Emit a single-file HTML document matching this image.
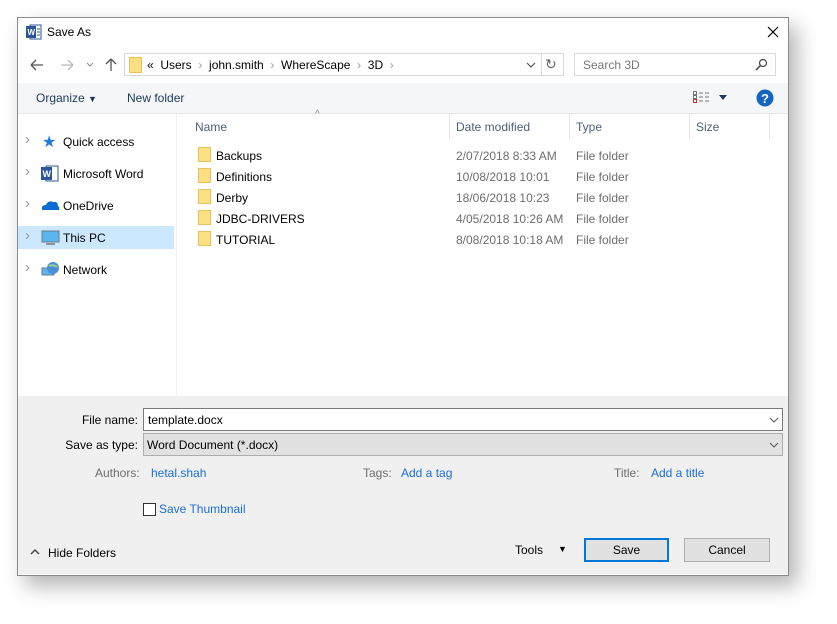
<!DOCTYPE html>
<html><head><style>
body{margin:0;width:837px;height:624px;background:#fff;font-family:"Liberation Sans",sans-serif;font-size:12px;color:#000;position:relative;overflow:hidden}
.a{position:absolute;white-space:nowrap}
.dlg{position:absolute;left:17px;top:17px;width:770px;height:557px;border:1px solid #8a8a8a;background:#fff;box-shadow:8px 10px 20px rgba(0,0,0,.3)}
.fold{position:absolute;width:13px;height:15px;background:#fcdf82;border:1px solid #e6c35c;box-sizing:border-box}
.blue{color:#1a6fd6}
.gray{color:#6d6d6d}
.chev{color:#999;font-size:12px}
.lbl{position:absolute;right:699px;white-space:nowrap}
</style></head><body>
<div class="dlg"></div>
<svg class="a" style="left:26px;top:24px" width="16" height="16"><rect x="4" y="1" width="11" height="14" fill="#fff" stroke="#2b579a"/><rect x="0" y="2" width="10" height="12" fill="#2b579a"/><text x="1.5" y="11" font-size="8" fill="#fff" font-family="Liberation Sans" font-weight="bold">W</text><line x1="11" y1="5" x2="14" y2="5" stroke="#2b579a"/><line x1="11" y1="8" x2="14" y2="8" stroke="#2b579a"/><line x1="11" y1="11" x2="14" y2="11" stroke="#2b579a"/></svg>
<div class="a" style="left:47px;top:25px">Save As</div>
<svg class="a" style="left:767px;top:26px" width="12" height="12"><path d="M1 1L11 11M11 1L1 11" stroke="#000" stroke-width="1.2"/></svg>
<svg class="a" style="left:29px;top:58px" width="90" height="14"><path d="M2 7H14M2 7L7 2M2 7L7 12" stroke="#555" stroke-width="1.3" fill="none"/><path d="M44 7H32M44 7L39 2M44 7L39 12" stroke="#bbb" stroke-width="1.3" fill="none"/><path d="M58 5L61 8L64 5" stroke="#888" fill="none"/><path d="M82 13V1M82 1L77 6M82 1L87 6" stroke="#555" stroke-width="1.3" fill="none"/></svg>
<div class="a" style="left:124px;top:53px;width:440px;height:23px;border:1px solid #d9d9d9;box-sizing:border-box"></div>
<div class="a" style="left:541px;top:53px;width:1px;height:23px;background:#d9d9d9"></div>
<div class="fold" style="left:129px;top:57px;height:16px"></div>
<div class="a" style="left:147px;top:58px;color:#000">« &nbsp;Users &nbsp;<span class="chev">›</span>&nbsp; john.smith &nbsp;<span class="chev">›</span>&nbsp; WhereScape &nbsp;<span class="chev">›</span>&nbsp; 3D &nbsp;<span class="chev">›</span></div>
<svg class="a" style="left:526px;top:61px" width="10" height="8"><path d="M1 2L5 6L9 2" stroke="#555" fill="none" stroke-width="1.2"/></svg>
<div class="a" style="left:545px;top:56px;color:#666;font-size:14px">↻</div>
<div class="a" style="left:574px;top:53px;width:202px;height:23px;border:1px solid #d9d9d9;box-sizing:border-box"></div>
<div class="a" style="left:583px;top:58px;color:#777">Search 3D</div>
<svg class="a" style="left:755px;top:58px" width="13" height="13"><circle cx="8" cy="5" r="3.5" stroke="#444" fill="none" stroke-width="1.2"/><path d="M5.5 7.5L1 12" stroke="#444" stroke-width="1.5"/></svg>
<div class="a" style="left:18px;top:83px;width:770px;height:30px;background:#f5f6f7;border-bottom:1px solid #e5e5e5"></div>
<div class="a" style="left:36px;top:91px;color:#1e395b">Organize <span style="font-size:9px">▼</span></div>
<div class="a" style="left:127px;top:91px;color:#1e395b">New folder</div>
<svg class="a" style="left:693px;top:91px" width="40" height="12"><g stroke="#777"><rect x="0.5" y="0.5" width="3" height="3" fill="none"/><rect x="0.5" y="4.5" width="3" height="3" fill="none"/><rect x="0.5" y="8.5" width="3" height="3" fill="none" stroke="#c33"/><path d="M6 2H10M12 2H16M6 6H10M12 6H16M6 10H10M12 10H16"/></g><path d="M26 4H34L30 9Z" fill="#1e395b"/></svg>
<svg class="a" style="left:756px;top:89px" width="18" height="18"><circle cx="9" cy="9" r="8.5" fill="#1565c0"/><text x="9" y="14" font-size="13" font-weight="bold" fill="#fff" text-anchor="middle" font-family="Liberation Sans">?</text></svg>
<div class="a" style="left:176px;top:114px;width:1px;height:282px;background:#f0f0f0"></div>
<div class="a" style="left:18px;top:226px;width:156px;height:23px;background:#cce8ff"></div>
<div class="a chev" style="left:25px;top:131px;font-size:15px">›</div>
<div class="a chev" style="left:25px;top:163px;font-size:15px">›</div>
<div class="a chev" style="left:25px;top:195px;font-size:15px">›</div>
<div class="a chev" style="left:25px;top:227px;font-size:15px">›</div>
<div class="a chev" style="left:25px;top:259px;font-size:15px">›</div>
<div class="a" style="left:42px;top:132px;color:#1e7be0;font-size:16px">★</div>
<svg class="a" style="left:41px;top:165px" width="18" height="17"><rect x="5" y="1" width="12" height="15" fill="#fff" stroke="#2b579a"/><rect x="0" y="2" width="11" height="13" fill="#2b579a"/><text x="1.5" y="12" font-size="9" fill="#fff" font-weight="bold" font-family="Liberation Sans">W</text></svg>
<svg class="a" style="left:41px;top:199px" width="19" height="12"><path d="M1 11Q0 6 5 6Q7 1 12 3Q17 2 17 7Q19 8 18 11Z" fill="#0e6bd0"/></svg>
<svg class="a" style="left:41px;top:230px" width="19" height="16"><rect x="1" y="1" width="17" height="11" fill="#5ab6ec" stroke="#6b7a8a"/><rect x="5" y="13" width="9" height="2" fill="#8a96a3"/></svg>
<svg class="a" style="left:41px;top:261px" width="19" height="16"><rect x="1" y="7" width="12" height="7" fill="#5ab6ec" stroke="#6b7a8a"/><circle cx="12" cy="7" r="6" fill="#4a90d9"/><path d="M8 5Q12 3 16 6" stroke="#9cd28a" stroke-width="2" fill="none"/></svg>
<div class="a" style="left:63px;top:135px">Quick access</div>
<div class="a" style="left:63px;top:167px">Microsoft Word</div>
<div class="a" style="left:63px;top:199px">OneDrive</div>
<div class="a" style="left:63px;top:231px">This PC</div>
<div class="a" style="left:63px;top:263px">Network</div>
<div class="a" style="left:315px;top:109px;color:#888;font-size:10px">^</div>
<div class="a" style="left:195px;top:120px;color:#4c607a">Name</div>
<div class="a" style="left:456px;top:120px;color:#4c607a">Date modified</div>
<div class="a" style="left:576px;top:120px;color:#4c607a">Type</div>
<div class="a" style="left:696px;top:120px;color:#4c607a">Size</div>
<div class="a" style="left:449px;top:114px;width:1px;height:25px;background:#e5e5e5"></div>
<div class="a" style="left:569px;top:114px;width:1px;height:25px;background:#e5e5e5"></div>
<div class="a" style="left:689px;top:114px;width:1px;height:25px;background:#e5e5e5"></div>
<div class="a" style="left:769px;top:114px;width:1px;height:25px;background:#e5e5e5"></div>
<div class="fold" style="left:198px;top:147px"></div><div class="a" style="left:216px;top:149px">Backups</div><div class="a gray" style="left:456px;top:149px">2/07/2018 8:33 AM</div><div class="a gray" style="left:576px;top:149px">File folder</div>
<div class="fold" style="left:198px;top:168px"></div><div class="a" style="left:216px;top:170px">Definitions</div><div class="a gray" style="left:456px;top:170px">10/08/2018 10:01</div><div class="a gray" style="left:576px;top:170px">File folder</div>
<div class="fold" style="left:198px;top:189px"></div><div class="a" style="left:216px;top:191px">Derby</div><div class="a gray" style="left:456px;top:191px">18/06/2018 10:23</div><div class="a gray" style="left:576px;top:191px">File folder</div>
<div class="fold" style="left:198px;top:210px"></div><div class="a" style="left:216px;top:212px">JDBC-DRIVERS</div><div class="a gray" style="left:456px;top:212px">4/05/2018 10:26 AM</div><div class="a gray" style="left:576px;top:212px">File folder</div>
<div class="fold" style="left:198px;top:231px"></div><div class="a" style="left:216px;top:233px">TUTORIAL</div><div class="a gray" style="left:456px;top:233px">8/08/2018 10:18 AM</div><div class="a gray" style="left:576px;top:233px">File folder</div>
<div class="a" style="left:18px;top:396px;width:770px;height:178px;background:#f0f0f0"></div>
<div class="lbl" style="top:413px">File name:</div>
<div class="a" style="left:143px;top:408px;width:640px;height:23px;background:#fff;border:1px solid #7a7a7a;box-sizing:border-box"></div>
<div class="a" style="left:148px;top:413px">template.docx</div>
<div class="lbl" style="top:438px">Save as type:</div>
<div class="a" style="left:143px;top:433px;width:640px;height:23px;background:#e1e1e1;border:1px solid #adadad;box-sizing:border-box"></div>
<div class="a" style="left:147px;top:438px">Word Document (*.docx)</div>
<svg class="a" style="left:769px;top:416px" width="10" height="8"><path d="M1 2L5 6L9 2" stroke="#555" fill="none"/></svg>
<svg class="a" style="left:769px;top:441px" width="10" height="8"><path d="M1 2L5 6L9 2" stroke="#555" fill="none"/></svg>
<div class="a gray" style="left:95px;top:466px">Authors:</div><div class="a blue" style="left:151px;top:466px">hetal.shah</div>
<div class="a gray" style="left:363px;top:466px">Tags:</div><div class="a blue" style="left:401px;top:466px">Add a tag</div>
<div class="a gray" style="left:614px;top:466px">Title:</div><div class="a blue" style="left:651px;top:466px">Add a title</div>
<div class="a" style="left:143px;top:503px;width:13px;height:13px;background:#fff;border:1px solid #333;box-sizing:border-box"></div>
<div class="a blue" style="left:159px;top:502px">Save Thumbnail</div>
<svg class="a" style="left:30px;top:548px" width="10" height="8"><path d="M1 6L5 2L9 6" stroke="#444" fill="none" stroke-width="1.4"/></svg>
<div class="a" style="left:48px;top:546px">Hide Folders</div>
<div class="a" style="left:515px;top:543px">Tools</div>
<div class="a" style="left:558px;top:544px;font-size:9px">▼</div>
<div class="a" style="left:584px;top:538px;width:85px;height:24px;background:#e1e1e1;border:2px solid #0078d7;box-sizing:border-box;text-align:center;line-height:20px">Save</div>
<div class="a" style="left:684px;top:538px;width:86px;height:24px;background:#e1e1e1;border:1px solid #adadad;box-sizing:border-box;text-align:center;line-height:22px">Cancel</div>
</body></html>
